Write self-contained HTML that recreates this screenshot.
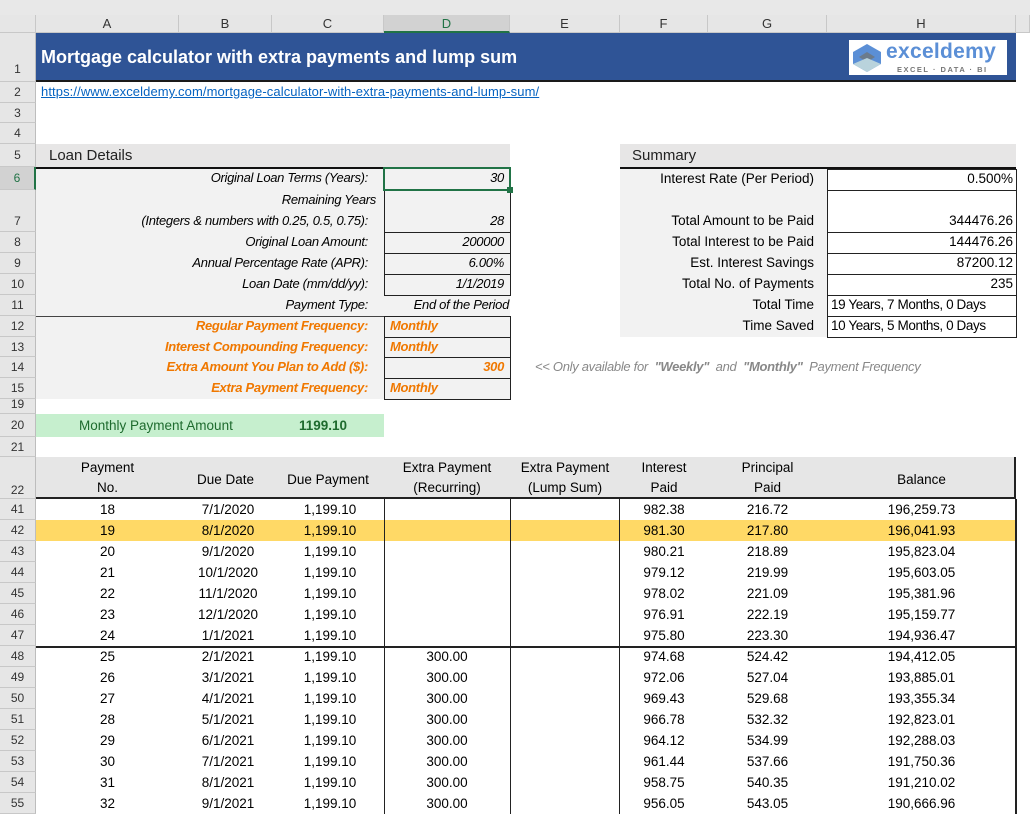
<!DOCTYPE html>
<html><head><meta charset="utf-8"><style>
body{margin:0;width:1030px;height:814px;position:relative;overflow:hidden;background:#fff;font-family:"Liberation Sans",sans-serif;font-size:13px;color:#000}
div{position:absolute;box-sizing:border-box;white-space:nowrap}
.ch{top:15px;height:18px;background:#e6e6e6;border-right:1px solid #c8c8c8;border-bottom:1px solid #c8c8c8;text-align:center;line-height:18px;font-size:13px;color:#333}
.rh{left:0;width:36px;background:#e6e6e6;border-bottom:1px solid #c8c8c8;border-right:1px solid #bdbdbd;text-align:center;font-size:12px;color:#333}
.t{font-size:13.5px;line-height:21px;height:21px;text-align:center}
.it{font-style:italic;text-align:right;font-size:13px;letter-spacing:-0.3px}
.or{color:#f07800;font-weight:bold;font-style:italic}
.box{border:1px solid #222;}
</style></head><body>
<div style="left:0;top:0;width:1030px;height:15px;background:#e8e8e8"></div>
<div style="left:0;top:15px;width:36px;height:18px;background:#e6e6e6;border-right:1px solid #c8c8c8;border-bottom:1px solid #c8c8c8"></div>
<div class="ch" style="left:36px;width:143px">A</div>
<div class="ch" style="left:179px;width:93px">B</div>
<div class="ch" style="left:272px;width:112px">C</div>
<div class="ch" style="left:384px;width:126px;background:#d2d2d2;border-bottom:2px solid #217346;color:#217346">D</div>
<div class="ch" style="left:510px;width:110px">E</div>
<div class="ch" style="left:620px;width:88px">F</div>
<div class="ch" style="left:708px;width:119px">G</div>
<div class="ch" style="left:827px;width:189px">H</div>
<div class="ch" style="left:1016px;width:14px"></div>

<div class="rh" style="top:33px;height:49px;line-height:72px">1</div>
<div class="rh" style="top:82px;height:21px;line-height:21px">2</div>
<div class="rh" style="top:103px;height:20px;line-height:20px">3</div>
<div class="rh" style="top:123px;height:21px;line-height:21px">4</div>
<div class="rh" style="top:144px;height:23px;line-height:23px">5</div>
<div class="rh" style="top:167px;height:23px;line-height:23px;background:#d2d2d2;color:#217346;border-right:2px solid #217346">6</div>
<div class="rh" style="top:190px;height:42px;line-height:62px">7</div>
<div class="rh" style="top:232px;height:21px;line-height:21px">8</div>
<div class="rh" style="top:253px;height:21px;line-height:21px">9</div>
<div class="rh" style="top:274px;height:21px;line-height:21px">10</div>
<div class="rh" style="top:295px;height:21px;line-height:21px">11</div>
<div class="rh" style="top:316px;height:21px;line-height:21px">12</div>
<div class="rh" style="top:337px;height:20px;line-height:20px">13</div>
<div class="rh" style="top:357px;height:21px;line-height:21px">14</div>
<div class="rh" style="top:378px;height:21px;line-height:21px">15</div>
<div class="rh" style="top:399px;height:15px;line-height:10px">19</div>
<div class="rh" style="top:414px;height:23px;line-height:23px">20</div>
<div class="rh" style="top:437px;height:20px;line-height:20px">21</div>
<div class="rh" style="top:457px;height:42px;line-height:66px">22</div>

<div style="left:36px;top:33px;width:980px;height:49px;background:#2f5496;border-bottom:2px solid #1a1a1a"></div>
<div style="left:41px;top:47px;color:#fff;font-weight:bold;font-size:18px">Mortgage calculator with extra payments and lump sum</div>
<div style="left:849px;top:40px;width:158px;height:35px;background:#fff"></div>
<svg style="position:absolute;left:851px;top:42px" width="32" height="32" viewBox="0 0 32 32"><polygon points="16,2 30,10 30,22 16,30 2,22 2,10" fill="#5b8fd6"/><polygon points="16,10 24,15 16,20 8,15" fill="#6b7b8c"/><polygon points="2,22 16,30 30,22 16,16" fill="#b9d3dc"/></svg>
<div style="left:886px;top:40px;font-size:21px;font-weight:bold;color:#5b8fd6;letter-spacing:0.3px">exceldemy</div>
<div style="left:897px;top:65px;font-size:7.5px;font-weight:bold;color:#777;letter-spacing:1.5px">EXCEL · DATA · BI</div>

<div style="left:41px;top:84px;color:#0563c1;text-decoration:underline;font-size:13px;letter-spacing:0.1px">https://www.exceldemy.com/mortgage-calculator-with-extra-payments-and-lump-sum/</div>

<div style="left:36px;top:144px;width:474px;height:23px;background:#e7e6e6"></div>
<div style="left:49px;top:147px;font-size:15px;color:#222">Loan Details</div>
<div style="left:36px;top:167px;width:348px;height:232px;background:#f2f2f2;border-top:2px solid #111"></div>
<div style="left:384px;top:190px;width:126px;height:126px;background:#f2f2f2"></div>
<div class="box" style="left:384px;top:190px;width:127px;height:43px"></div>
<div class="box" style="left:384px;top:232px;width:127px;height:22px"></div>
<div class="box" style="left:384px;top:253px;width:127px;height:22px"></div>
<div class="box" style="left:384px;top:274px;width:127px;height:22px"></div>
<div style="left:36px;top:316px;width:348px;height:1px;background:#444"></div>
<div class="box" style="left:384px;top:316px;width:127px;height:22px;background:#f2f2f2"></div>
<div class="box" style="left:384px;top:337px;width:127px;height:21px;background:#f2f2f2"></div>
<div class="box" style="left:384px;top:357px;width:127px;height:22px;background:#f2f2f2"></div>
<div class="box" style="left:384px;top:378px;width:127px;height:22px;background:#f2f2f2"></div>
<div style="left:383px;top:167px;width:128px;height:24px;border:2px solid #217346;background:#f2f2f2"></div>
<div style="left:507px;top:187px;width:6px;height:6px;background:#217346"></div>

<div class="it" style="right:662px;top:170px">Original Loan Terms (Years):</div>
<div class="it" style="right:654px;top:192px">Remaining Years</div>
<div class="it" style="right:662px;top:213px">(Integers &amp; numbers with 0.25, 0.5, 0.75):</div>
<div class="it" style="right:662px;top:234px">Original Loan Amount:</div>
<div class="it" style="right:662px;top:255px">Annual Percentage Rate (APR):</div>
<div class="it" style="right:662px;top:276px">Loan Date (mm/dd/yy):</div>
<div class="it" style="right:662px;top:297px">Payment Type:</div>
<div class="it or" style="right:662px;top:318px">Regular Payment Frequency:</div>
<div class="it or" style="right:662px;top:339px">Interest Compounding Frequency:</div>
<div class="it or" style="right:662px;top:359px">Extra Amount You Plan to Add ($):</div>
<div class="it or" style="right:662px;top:380px">Extra Payment Frequency:</div>
<div class="it" style="right:526px;top:170px">30</div>
<div class="it" style="right:526px;top:213px">28</div>
<div class="it" style="right:526px;top:234px">200000</div>
<div class="it" style="right:526px;top:255px">6.00%</div>
<div class="it" style="right:526px;top:276px">1/1/2019</div>
<div class="it" style="right:521px;top:297px">End of the Period</div>
<div class="it or" style="left:390px;top:318px">Monthly</div>
<div class="it or" style="left:390px;top:339px">Monthly</div>
<div class="it or" style="right:526px;top:359px">300</div>
<div class="it or" style="left:390px;top:380px">Monthly</div>

<div class="it" style="left:535px;top:359px;color:#888">&lt;&lt; Only available for &nbsp;<b>"Weekly"</b>&nbsp; and &nbsp;<b>"Monthly"</b>&nbsp; Payment Frequency</div>

<div style="left:620px;top:144px;width:396px;height:23px;background:#e7e6e6"></div>
<div style="left:632px;top:147px;font-size:15px;color:#222">Summary</div>
<div style="left:620px;top:167px;width:207px;height:170px;background:#f2f2f2;border-top:2px solid #111"></div>
<div style="left:827px;top:167px;width:189px;height:2px;background:#111"></div>
<div class="box" style="left:827px;top:169px;width:190px;height:22px"></div>
<div class="box" style="left:827px;top:190px;width:190px;height:43px"></div>
<div class="box" style="left:827px;top:232px;width:190px;height:22px"></div>
<div class="box" style="left:827px;top:253px;width:190px;height:22px"></div>
<div class="box" style="left:827px;top:274px;width:190px;height:22px"></div>
<div class="box" style="left:827px;top:295px;width:190px;height:22px"></div>
<div class="box" style="left:827px;top:316px;width:190px;height:22px"></div>
<div style="right:216px;top:171px;font-size:13.5px">Interest Rate (Per Period)</div>
<div style="right:216px;top:213px;font-size:13.5px">Total Amount to be Paid</div>
<div style="right:216px;top:234px;font-size:13.5px">Total Interest to be Paid</div>
<div style="right:216px;top:255px;font-size:13.5px">Est. Interest Savings</div>
<div style="right:216px;top:276px;font-size:13.5px">Total No. of Payments</div>
<div style="right:216px;top:297px;font-size:13.5px">Total Time</div>
<div style="right:216px;top:318px;font-size:13.5px">Time Saved</div>
<div style="right:17px;top:171px;font-size:13.5px">0.500%</div>
<div style="right:17px;top:213px;font-size:13.5px">344476.26</div>
<div style="right:17px;top:234px;font-size:13.5px">144476.26</div>
<div style="right:17px;top:255px;font-size:13.5px">87200.12</div>
<div style="right:17px;top:276px;font-size:13.5px">235</div>
<div style="left:831px;top:297px;font-size:13.5px;letter-spacing:-0.4px">19 Years, 7 Months, 0 Days</div>
<div style="left:831px;top:318px;font-size:13.5px;letter-spacing:-0.4px">10 Years, 5 Months, 0 Days</div>

<div style="left:36px;top:414px;width:348px;height:23px;background:#c6efce"></div>
<div style="left:79px;top:418px;color:#1e6b2e;font-size:13.5px">Monthly Payment Amount</div>
<div style="left:299px;top:418px;color:#1e6b2e;font-size:13.5px;font-weight:bold">1199.10</div>

<div style="left:36px;top:457px;width:980px;height:42px;background:#e6e6e6;border-bottom:2px solid #222;border-right:2px solid #222"></div>
<div class="t" style="left:36px;top:458px;width:143px;line-height:20px;height:40px">Payment<br>No.</div>
<div class="t" style="left:179px;top:469px;width:93px">Due Date</div>
<div class="t" style="left:272px;top:469px;width:112px">Due Payment</div>
<div class="t" style="left:384px;top:458px;width:126px;line-height:20px;height:40px">Extra Payment<br>(Recurring)</div>
<div class="t" style="left:510px;top:458px;width:110px;line-height:20px;height:40px">Extra Payment<br>(Lump Sum)</div>
<div class="t" style="left:620px;top:458px;width:88px;line-height:20px;height:40px">Interest<br>Paid</div>
<div class="t" style="left:708px;top:458px;width:119px;line-height:20px;height:40px">Principal<br>Paid</div>
<div class="t" style="left:827px;top:469px;width:189px">Balance</div>

<div style="left:36px;top:520px;width:980px;height:21px;background:#ffd966"></div>
<div style="left:36px;top:646px;width:980px;height:2px;background:#222"></div>
<div style="left:384px;top:499px;width:1px;height:315px;background:#222"></div>
<div style="left:510px;top:499px;width:1px;height:315px;background:#222"></div>
<div style="left:619px;top:499px;width:1px;height:315px;background:#222"></div>
<div style="left:1015px;top:499px;width:2px;height:315px;background:#222"></div>

<div id="rows"></div>
<script>
var d=[[41,18,'7/1/2020','',982.38,216.72,'196,259.73'],[42,19,'8/1/2020','',981.30,217.80,'196,041.93'],[43,20,'9/1/2020','',980.21,218.89,'195,823.04'],[44,21,'10/1/2020','',979.12,219.99,'195,603.05'],[45,22,'11/1/2020','',978.02,221.09,'195,381.96'],[46,23,'12/1/2020','',976.91,222.19,'195,159.77'],[47,24,'1/1/2021','',975.80,223.30,'194,936.47'],[48,25,'2/1/2021','300.00',974.68,524.42,'194,412.05'],[49,26,'3/1/2021','300.00',972.06,527.04,'193,885.01'],[50,27,'4/1/2021','300.00',969.43,529.68,'193,355.34'],[51,28,'5/1/2021','300.00',966.78,532.32,'192,823.01'],[52,29,'6/1/2021','300.00',964.12,534.99,'192,288.03'],[53,30,'7/1/2021','300.00',961.44,537.66,'191,750.36'],[54,31,'8/1/2021','300.00',958.75,540.35,'191,210.02'],[55,32,'9/1/2021','300.00',956.05,543.05,'190,666.96']];
var h='';
d.forEach(function(r,i){var y=499+i*21;
h+='<div class="rh" style="top:'+y+'px;height:21px;line-height:21px">'+r[0]+'</div>';
function c(x,w,t){h+='<div class="t" style="left:'+x+'px;top:'+y+'px;width:'+w+'px">'+t+'</div>';}
c(36,143,r[1]);c(179,98,r[2]);c(272,116,'1,199.10');c(384,126,r[3]);c(620,88,r[4].toFixed(2));c(708,119,r[5].toFixed(2));c(827,189,r[6]);});
document.getElementById('rows').outerHTML=h;
</script>
</body></html>
